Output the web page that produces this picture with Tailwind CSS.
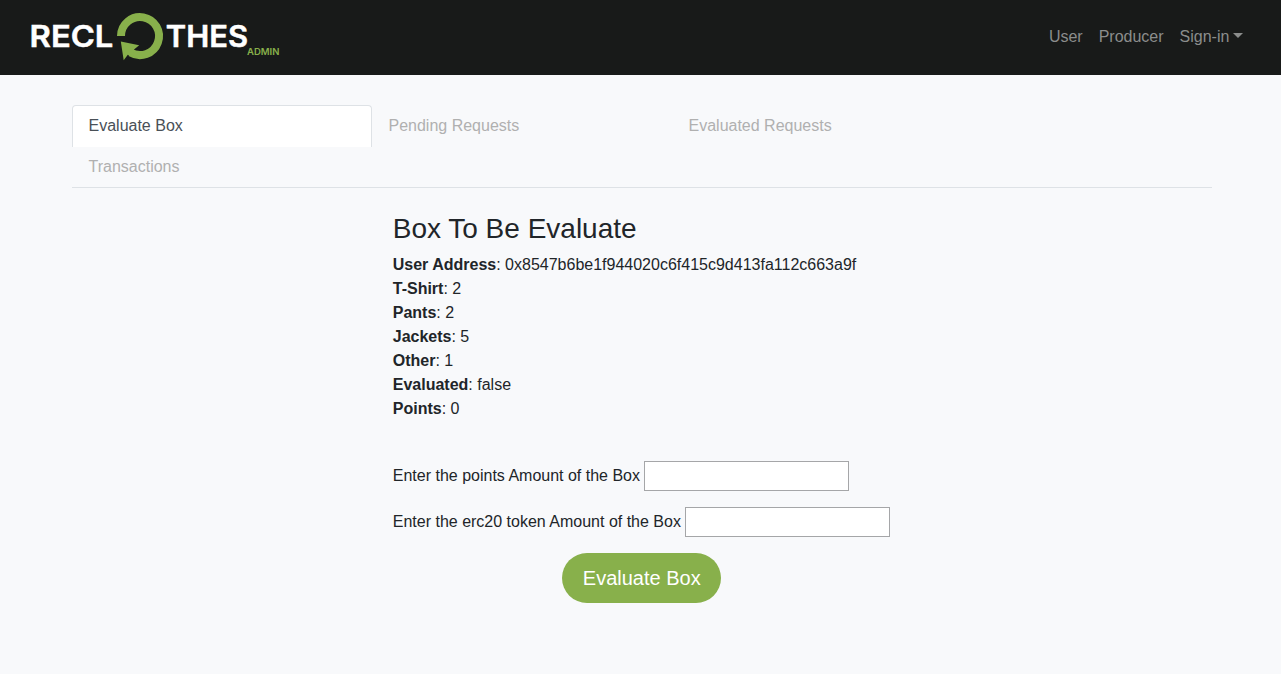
<!DOCTYPE html>
<html lang="en">
<head>
<meta charset="utf-8">
<title>Reclothes Admin</title>
<script src="https://cdn.jsdelivr.net/npm/@tailwindcss/browser@4"></script>
</head>
<body class="min-h-screen bg-[#f8f9fb] font-['Liberation_Sans',sans-serif] text-base text-[#212529]">
<header class="flex h-[75px] items-start justify-between bg-[#181a19] pr-[37.6px]">
  <a href="#" aria-label="Reclothes Admin">
    <svg class="block" width="300" height="75" viewBox="0 0 300 75">
      <g fill="#fff" stroke="#fff" stroke-width=".5" font-family="Inter, sans-serif" font-weight="600" font-size="29.8">
        <text x="29.6" y="47.3" textLength="83.8" lengthAdjust="spacingAndGlyphs">RECL</text>
        <text x="165.8" y="47.3" textLength="82.2" lengthAdjust="spacingAndGlyphs">THES</text>
      </g>
      <path d="M121 36A19 19 0 1 1 130.5 52.5" fill="none" stroke="#88b04b" stroke-width="8"/>
      <path d="M120.8 41.5L139.2 45.2L134 49.5L133 57L127.8 54.8L123.7 60.3Z" fill="#88b04b"/>
      <text x="247" y="55" fill="#88b04b" font-family="Inter, sans-serif" font-weight="600" font-size="9.6" textLength="32.5" lengthAdjust="spacingAndGlyphs">ADMIN</text>
    </svg>
  </a>
  <nav class="mt-[25px] flex gap-4 text-[#8b8d8c]">
    <a href="#">User</a>
    <a href="#">Producer</a>
    <a href="#" class="flex">Sign-in<span class="mt-[8px] ml-1 h-0 w-0 border-x-[5px] border-t-[5px] border-x-transparent border-t-current"></span></a>
  </nav>
</header>
<main class="mt-[30px] ml-[71.5px] w-[1140px]">
  <nav class="flex flex-wrap border-b border-[#dee2e6] text-[#b0b0b0]">
    <a href="#" class="h-[42px] w-[300px] rounded-t border border-b-0 border-[#dee2e6] bg-white px-4 py-2 text-[#495057]">Evaluate Box</a>
    <a href="#" class="w-[300px] px-[17px] py-[9px]">Pending Requests</a>
    <a href="#" class="w-[300px] px-[17px] py-[9px]">Evaluated Requests</a>
    <a href="#" class="h-10 w-[300px] px-[17px] py-2">Transactions</a>
  </nav>
  <section class="mt-6 ml-[321.25px] w-[498px]">
    <h3 class="mb-[7px] text-[28px] leading-[34px]">Box To Be Evaluate</h3>
    <p><b>User Address</b>: 0x8547b6be1f944020c6f415c9d413fa112c663a9f</p>
    <p><b>T-Shirt</b>: 2</p>
    <p><b>Pants</b>: 2</p>
    <p><b>Jackets</b>: 5</p>
    <p><b>Other</b>: 1</p>
    <p><b>Evaluated</b>: false</p>
    <p><b>Points</b>: 0</p>
    <form>
      <label class="mt-10 flex h-[30px] items-center gap-1 whitespace-nowrap">Enter the points Amount of the Box <input class="h-[30px] w-[205px] border border-[#a5a6a8] bg-white px-1"></label>
      <label class="mt-4 flex h-[30px] items-center gap-1 whitespace-nowrap">Enter the erc20 token Amount of the Box <input class="h-[30px] w-[205px] border border-[#a5a6a8] bg-white px-1"></label>
      <button type="button" class="mx-auto mt-4 block h-[50px] w-[159px] rounded-full bg-[#88b04b] text-xl text-white">Evaluate Box</button>
    </form>
  </section>
</main>
</body>
</html>
